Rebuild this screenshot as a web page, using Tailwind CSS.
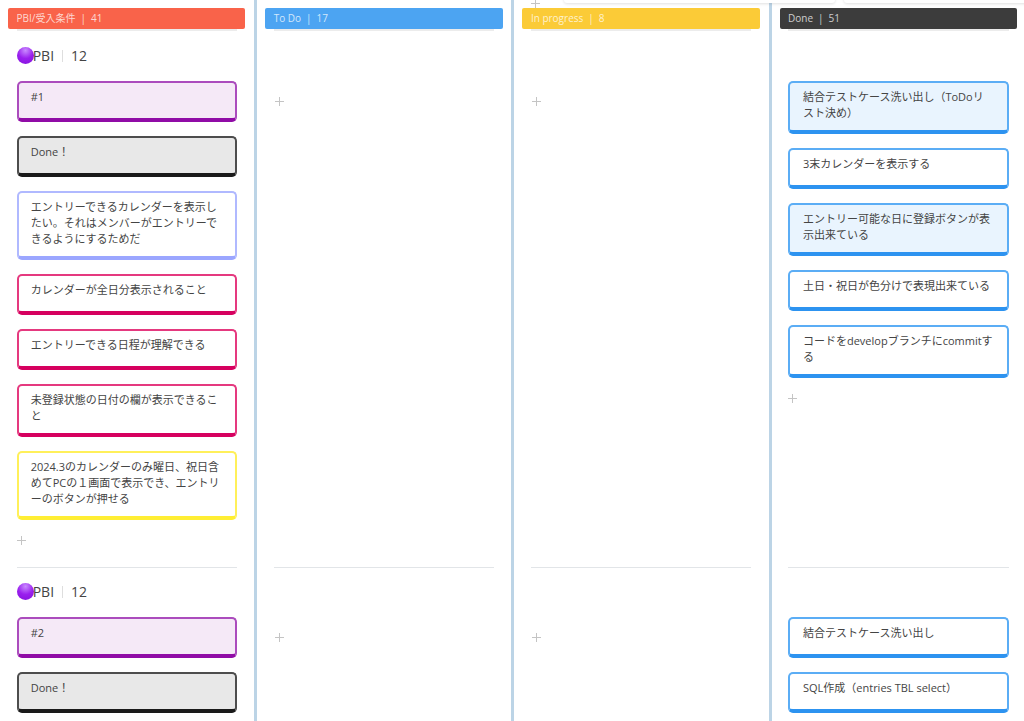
<!DOCTYPE html>
<html lang="en">
<head>
    <meta charset="UTF-8">
    <meta name="viewport" content="width=device-width, initial-scale=1.0">
    <title>Scrum board</title>
    <script src="https://cdn.jsdelivr.net/npm/@tailwindcss/browser@4"></script>
</head>
<body class="bg-white">

<div class="relative flex h-[721px] w-[1024px] overflow-hidden bg-white text-[11px] leading-[16px] text-[#444] [font-family:'Open_Sans','Noto_Sans_CJK_JP',sans-serif]">

    <!-- cut off cards of the row above -->
    <div class="absolute left-[564px] top-[-10px] z-10 h-[13px] w-[271px] rounded-[3px] bg-white shadow-[0_1px_3px_rgba(0,0,0,0.12)]"></div>
    <div class="absolute left-[844px] top-[-10px] z-10 h-[13px] w-[190px] rounded-[3px] bg-white shadow-[0_1px_3px_rgba(0,0,0,0.12)]"></div>
    <svg class="absolute left-[531px] top-[-1px] z-10 h-[9px] w-[9px]" viewBox="0 0 9 9"><path d="M4.5 0v9M0 4.5h9" stroke="#c4c4c4" stroke-width="1"/></svg>

    <!-- PBI column -->
    <section class="w-[257.2px] shrink-0 border-r-[3px] border-[#bcd4e6]">
        <div class="mt-[8px] ml-[8px] flex h-[21px] w-[237px] items-center gap-[5px] rounded-[2px] bg-[#f9634a] px-[8.5px] pb-[1px] text-[10px] text-white/75">
            <span>PBI/受入条件</span><span>|</span><span>41</span>
        </div>
        <div class="ml-[16.7px] mb-[1px] h-[2px] w-[220px] bg-[#ececec]"></div>

        <div class="ml-[16.7px] h-[536px] w-[220px] border-b border-[#e2e5e8]">
            <div class="flex h-[47px] mb-[2px] items-center text-[14px] text-[#444]">
                <span class="mr-[-1px] h-[17px] w-[17px] shrink-0 rounded-full bg-[radial-gradient(circle_at_50%_20%,#c98bff,#9a20ee_50%,#8410dc)]"></span>
                <span>PBI</span><span class="ml-[8px] mr-[8px] h-[12px] w-px bg-[#dedede]"></span><span>12</span>
            </div>
            <div class="flex flex-col gap-[14px]">
                <div class="min-h-[41px] rounded-[5px] border-2 border-b-4 border-[#ab4cbd] border-b-[#900ca6] bg-[#f5e9f7] pl-[12px] pr-[13px] pt-[6px] pb-[9px]">#1</div>
                <div class="min-h-[41px] rounded-[5px] border-2 border-b-4 border-[#4d4d4d] border-b-[#1a1a1a] bg-[#e8e8e8] pl-[12px] pr-[13px] pt-[6px] pb-[9px]">Done！</div>
                <div class="min-h-[41px] rounded-[5px] border-2 border-b-4 border-[#b0b9ff] border-b-[#9ba6ff] bg-white pl-[12px] pr-[13px] pt-[6px] pb-[9px]">エントリーできるカレンダーを表示したい。それはメンバーがエントリーできるようにするためだ</div>
                <div class="min-h-[41px] rounded-[5px] border-2 border-b-4 border-[#e5397f] border-b-[#d6005f] bg-white pl-[12px] pr-[13px] pt-[6px] pb-[9px]">カレンダーが全日分表示されること</div>
                <div class="min-h-[41px] rounded-[5px] border-2 border-b-4 border-[#e5397f] border-b-[#d6005f] bg-white pl-[12px] pr-[13px] pt-[6px] pb-[9px]">エントリーできる日程が理解できる</div>
                <div class="min-h-[41px] rounded-[5px] border-2 border-b-4 border-[#e5397f] border-b-[#d6005f] bg-white pl-[12px] pr-[13px] pt-[6px] pb-[9px]">未登録状態の日付の欄が表示できること</div>
                <div class="min-h-[41px] rounded-[5px] border-2 border-b-4 border-[#fff05a] border-b-[#ffee33] bg-white pl-[12px] pr-[13px] pt-[6px] pb-[9px]">2024.3のカレンダーのみ曜日、祝日含めてPCの１画面で表示でき、エントリーのボタンが押せる</div>
            </div>
            <svg class="mt-[16px] h-[9px] w-[9px]" viewBox="0 0 9 9"><path d="M4.5 0v9M0 4.5h9" stroke="#c4c4c4" stroke-width="1"/></svg>
        </div>

        <div class="ml-[16.7px] w-[220px]">
            <div class="flex h-[47px] mb-[2px] items-center text-[14px] text-[#444]">
                <span class="mr-[-1px] h-[17px] w-[17px] shrink-0 rounded-full bg-[radial-gradient(circle_at_50%_20%,#c98bff,#9a20ee_50%,#8410dc)]"></span>
                <span>PBI</span><span class="ml-[8px] mr-[8px] h-[12px] w-px bg-[#dedede]"></span><span>12</span>
            </div>
            <div class="flex flex-col gap-[14px]">
                <div class="min-h-[41px] rounded-[5px] border-2 border-b-4 border-[#ab4cbd] border-b-[#900ca6] bg-[#f5e9f7] pl-[12px] pr-[13px] pt-[6px] pb-[9px]">#2</div>
                <div class="min-h-[41px] rounded-[5px] border-2 border-b-4 border-[#4d4d4d] border-b-[#1a1a1a] bg-[#e8e8e8] pl-[12px] pr-[13px] pt-[6px] pb-[9px]">Done！</div>
            </div>
        </div>
    </section>

    <!-- To Do column -->
    <section class="w-[257.2px] shrink-0 border-r-[3px] border-[#bcd4e6]">
        <div class="mt-[8px] ml-[8px] flex h-[21px] w-[237.5px] items-center gap-[5px] rounded-[2px] bg-[#4ca4f2] px-[8.5px] pb-[1px] text-[10px] text-white/75">
            <span>To Do</span><span>|</span><span>17</span>
        </div>
        <div class="ml-[16.7px] mb-[1px] h-[2px] w-[220px] bg-[#ececec]"></div>
        <div class="ml-[16.7px] h-[536px] w-[220px] border-b border-[#e2e5e8] pt-[49px]">
            <svg class="mt-[16px] ml-[1px] h-[9px] w-[9px]" viewBox="0 0 9 9"><path d="M4.5 0v9M0 4.5h9" stroke="#c4c4c4" stroke-width="1"/></svg>
        </div>
        <div class="ml-[16.7px] w-[220px] pt-[49px]">
            <svg class="mt-[16px] ml-[1px] h-[9px] w-[9px]" viewBox="0 0 9 9"><path d="M4.5 0v9M0 4.5h9" stroke="#c4c4c4" stroke-width="1"/></svg>
        </div>
    </section>

    <!-- In progress column -->
    <section class="w-[257.2px] shrink-0 border-r-[3px] border-[#bcd4e6]">
        <div class="mt-[8px] ml-[8px] flex h-[21px] w-[237.5px] items-center gap-[5px] rounded-[2px] bg-[#fbcb37] px-[8.5px] pb-[1px] text-[10px] text-white/75">
            <span>In progress</span><span>|</span><span>8</span>
        </div>
        <div class="ml-[16.7px] mb-[1px] h-[2px] w-[220px] bg-[#ececec]"></div>
        <div class="ml-[16.7px] h-[536px] w-[220px] border-b border-[#e2e5e8] pt-[49px]">
            <svg class="mt-[16px] ml-[1px] h-[9px] w-[9px]" viewBox="0 0 9 9"><path d="M4.5 0v9M0 4.5h9" stroke="#c4c4c4" stroke-width="1"/></svg>
        </div>
        <div class="ml-[16.7px] w-[220px] pt-[49px]">
            <svg class="mt-[16px] ml-[1px] h-[9px] w-[9px]" viewBox="0 0 9 9"><path d="M4.5 0v9M0 4.5h9" stroke="#c4c4c4" stroke-width="1"/></svg>
        </div>
    </section>

    <!-- Done column -->
    <section class="w-[253.4px] shrink-0">
        <div class="mt-[8px] ml-[8px] flex h-[21px] w-[237.5px] items-center gap-[5px] rounded-[2px] bg-[#3c3c3c] px-[8.5px] pb-[1px] text-[10px] text-white/75">
            <span>Done</span><span>|</span><span>51</span>
        </div>
        <div class="ml-[16.4px] mb-[1px] h-[2px] w-[221px] bg-[#ececec]"></div>
        <div class="ml-[16.4px] h-[536px] w-[221px] border-b border-[#e2e5e8] pt-[49px]">
            <div class="flex flex-col gap-[14px]">
                <div class="min-h-[41px] rounded-[5px] border-2 border-b-4 border-[#5badf5] border-b-[#2d93f0] bg-[#e9f4fe] pl-[13px] pr-[13px] pt-[6px] pb-[9px]">結合テストケース洗い出し（ToDoリスト決め）</div>
                <div class="min-h-[41px] rounded-[5px] border-2 border-b-4 border-[#5badf5] border-b-[#2d93f0] bg-white pl-[13px] pr-[13px] pt-[6px] pb-[9px]">3末カレンダーを表示する</div>
                <div class="min-h-[41px] rounded-[5px] border-2 border-b-4 border-[#5badf5] border-b-[#2d93f0] bg-[#e9f4fe] pl-[13px] pr-[13px] pt-[6px] pb-[9px]">エントリー可能な日に登録ボタンが表示出来ている</div>
                <div class="min-h-[41px] rounded-[5px] border-2 border-b-4 border-[#5badf5] border-b-[#2d93f0] bg-white pl-[13px] pr-[13px] pt-[6px] pb-[9px]">土日・祝日が色分けで表現出来ている</div>
                <div class="min-h-[41px] rounded-[5px] border-2 border-b-4 border-[#5badf5] border-b-[#2d93f0] bg-white pl-[13px] pr-[13px] pt-[6px] pb-[9px]">コードをdevelopブランチにcommitする</div>
            </div>
            <svg class="mt-[16px] h-[9px] w-[9px]" viewBox="0 0 9 9"><path d="M4.5 0v9M0 4.5h9" stroke="#c4c4c4" stroke-width="1"/></svg>
        </div>
        <div class="ml-[16.4px] w-[221px] pt-[49px]">
            <div class="flex flex-col gap-[14px]">
                <div class="min-h-[41px] rounded-[5px] border-2 border-b-4 border-[#5badf5] border-b-[#2d93f0] bg-white pl-[13px] pr-[13px] pt-[6px] pb-[9px]">結合テストケース洗い出し</div>
                <div class="min-h-[41px] rounded-[5px] border-2 border-b-4 border-[#5badf5] border-b-[#2d93f0] bg-white pl-[13px] pr-[13px] pt-[6px] pb-[9px]">SQL作成（entries TBL select）</div>
            </div>
        </div>
    </section>
</div>

</body>
</html>
